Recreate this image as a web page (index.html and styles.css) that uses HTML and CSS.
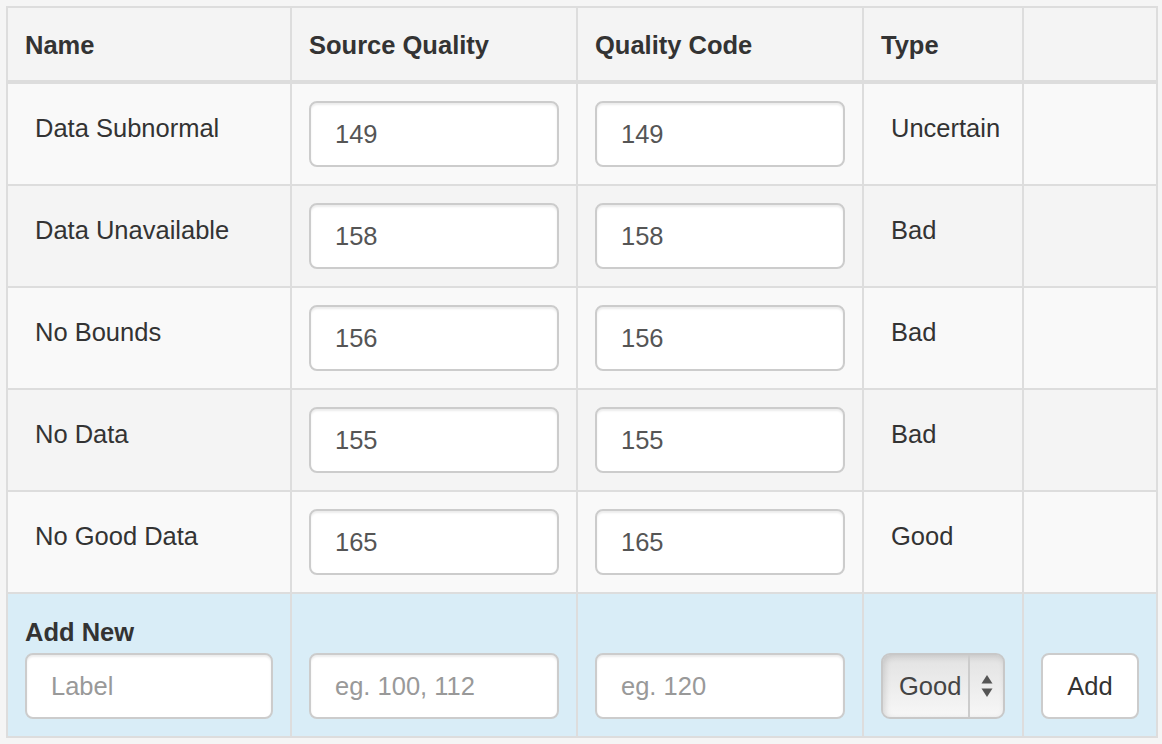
FILE: index.html
```html
<!DOCTYPE html>
<html lang="en">
<head>
<meta charset="utf-8">
<title>Quality Codes</title>
<link rel="stylesheet" href="styles.css">
</head>
<body>
<div class="qtable">
  <div class="row head">
    <div class="cell">Name</div>
    <div class="cell">Source Quality</div>
    <div class="cell">Quality Code</div>
    <div class="cell">Type</div>
    <div class="cell"></div>
  </div>
  <div class="row odd">
    <div class="cell text">Data Subnormal</div>
    <div class="cell"><input class="field" value="149"></div>
    <div class="cell"><input class="field" value="149"></div>
    <div class="cell text">Uncertain</div>
    <div class="cell"></div>
  </div>
  <div class="row even">
    <div class="cell text">Data Unavailable</div>
    <div class="cell"><input class="field" value="158"></div>
    <div class="cell"><input class="field" value="158"></div>
    <div class="cell text">Bad</div>
    <div class="cell"></div>
  </div>
  <div class="row odd">
    <div class="cell text">No Bounds</div>
    <div class="cell"><input class="field" value="156"></div>
    <div class="cell"><input class="field" value="156"></div>
    <div class="cell text">Bad</div>
    <div class="cell"></div>
  </div>
  <div class="row even">
    <div class="cell text">No Data</div>
    <div class="cell"><input class="field" value="155"></div>
    <div class="cell"><input class="field" value="155"></div>
    <div class="cell text">Bad</div>
    <div class="cell"></div>
  </div>
  <div class="row odd">
    <div class="cell text">No Good Data</div>
    <div class="cell"><input class="field" value="165"></div>
    <div class="cell"><input class="field" value="165"></div>
    <div class="cell text">Good</div>
    <div class="cell"></div>
  </div>
  <div class="row add">
    <div class="cell stack">
      <label class="add-label">Add New</label>
      <input class="field" placeholder="Label">
    </div>
    <div class="cell stack"><input class="field" placeholder="eg. 100, 112"></div>
    <div class="cell stack"><input class="field" placeholder="eg. 120"></div>
    <div class="cell stack">
      <div class="select">
        <span class="select-value">Good</span>
        <span class="select-arrows">
          <svg width="12" height="22" viewBox="0 0 12 22"><path d="M6 0 L11.5 8.5 L0.5 8.5 Z" fill="#555"/><path d="M0.5 13.5 L11.5 13.5 L6 22 Z" fill="#555"/></svg>
        </span>
      </div>
    </div>
    <div class="cell stack"><button class="btn">Add</button></div>
  </div>
</div>
</body>
</html>
```
FILE: styles.css
```css
html, body {
  margin: 0;
  background: #f5f5f5;
}
body {
  padding: 6px;
  font-family: "Liberation Sans", Arial, sans-serif;
  font-size: 25.5px;
  color: #333;
}
.qtable {
  width: 1152px;
  box-sizing: border-box;
  border-right: 2px solid #ddd;
  border-bottom: 2px solid #ddd;
}
.row {
  display: grid;
  grid-template-columns: 284px 286px 286px 160px 134px;
}
.cell {
  box-sizing: border-box;
  border-left: 2px solid #ddd;
  border-top: 2px solid #ddd;
  padding: 17px;
  min-width: 0;
}
.head .cell {
  background: #f4f4f4;
  font-weight: bold;
  line-height: 38px;
  padding: 18px 17px 16px;
  border-bottom: 2px solid #ddd;
}
.odd .cell { background: #f9f9f9; }
.even .cell { background: #f4f4f4; }
.cell.text {
  padding: 27px 27px 17px;
  line-height: 34px;
}
.add .cell {
  background: #d9edf7;
}
.cell.stack {
  display: flex;
  flex-direction: column;
  justify-content: flex-end;
}
.add-label {
  display: block;
  font-weight: bold;
  line-height: 42px;
  height: 42px;
}
.field {
  display: block;
  width: 100%;
  height: 66px;
  box-sizing: border-box;
  margin: 0;
  border: 2px solid #ccc;
  border-radius: 8px;
  background: #fff;
  padding: 0 24px;
  font-family: inherit;
  font-size: 25.5px;
  color: #555;
  box-shadow: inset 0 2px 2px rgba(0,0,0,0.075);
  outline: none;
}
.field::placeholder {
  color: #999;
}
.select {
  display: flex;
  align-items: stretch;
  width: 124px;
  height: 66px;
  box-sizing: border-box;
  border: 2px solid #c8c8c8;
  border-radius: 9px;
  background: linear-gradient(#e2e2e2, #f7f7f7);
  box-shadow: inset 2px 2px 6px rgba(0,0,0,0.13);
  color: #444;
}
.select-value {
  display: flex;
  align-items: center;
  padding-left: 16px;
  width: 69px;
  border-right: 2px solid #ccc;
}
.select-arrows {
  flex: 1;
  display: flex;
  align-items: center;
  justify-content: center;
}
.btn {
  display: block;
  width: 98px;
  height: 66px;
  box-sizing: border-box;
  margin: 0;
  border: 2px solid #ccc;
  border-radius: 8px;
  background: #fff;
  font-family: inherit;
  font-size: 25.5px;
  color: #333;
  padding: 0;
}
```
